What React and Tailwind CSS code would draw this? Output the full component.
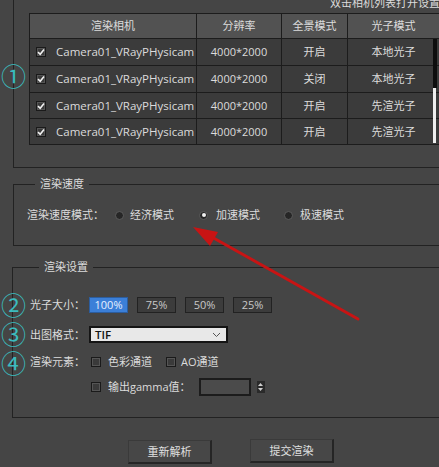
import React from 'react';

const rows = [
  { mode: '开启', photon: '本地光子', h: 'h-[27px]' },
  { mode: '关闭', photon: '本地光子', h: 'h-[27px]' },
  { mode: '开启', photon: '先渲光子', h: 'h-[26px]' },
  { mode: '开启', photon: '先渲光子', h: 'h-[26px]' },
];

const cell = 'flex items-center justify-center border-r border-b border-[#1c1c1c]';

const Check = ({ checked }) => (
  <span className="flex h-[10px] w-[10px] shrink-0 items-center justify-center border border-[#1a1a1a] bg-[#3a3a3a] shadow-[inset_0_0_0_1px_#555]">
    {checked && (
      <svg width="8" height="8" viewBox="0 0 8 8">
        <path d="M1 4.2 L3.2 6.3 L7 1.6" fill="none" stroke="#f2f2f2" strokeWidth="1.6" />
      </svg>
    )}
  </span>
);

const Radio = ({ on }) => (
  <span className="flex h-[9px] w-[9px] items-center justify-center rounded-full border border-[#5c5c5c] bg-[#262626]">
    {on && <span className="h-[4px] w-[4px] rounded-full bg-[#f0f0f0]" />}
  </span>
);

const Circled = ({ children, top }) => (
  <span
    className={`absolute left-[1px] ${top} text-[25px] leading-[24px] text-[#3bbcbf] font-['Noto_Sans_CJK_SC',sans-serif]`}
  >
    {children}
  </span>
);

export default function App() {
  return (
    <div className="relative h-[467px] w-[439px] overflow-hidden bg-[#454545] text-[11px] leading-[16px] text-[#dcdcdc] font-['Open_Sans','Noto_Sans_CJK_SC',sans-serif]">
      {/* camera list */}
      <div className="ml-[13px] flex h-[168px] w-[440px] flex-col border-b border-l border-[#222]">
        <div className="-mt-[5px] ml-[316px] whitespace-nowrap">双击相机列表打开设置</div>
        <div className="relative ml-[15px] mt-[2px] w-[411px] border-l border-t border-[#1c1c1c]">
          <div className="grid h-[25px] grid-cols-[167px_85px_66px_92px] bg-[#525252]">
            <div className={cell}>渲染相机</div>
            <div className={cell}>分辨率</div>
            <div className={cell}>全景模式</div>
            <div className={cell}>光子模式</div>
          </div>
          {rows.map((r, i) => (
            <div key={i} className={`grid grid-cols-[167px_85px_66px_92px] bg-[#3b3b3b] ${r.h}`}>
              <div className="flex items-center gap-[10px] border-b border-r border-[#1c1c1c] pl-[6px] text-[11.5px]">
                <Check checked />
                <span>Camera01_VRayPHysicam</span>
              </div>
              <div className={cell}>4000*2000</div>
              <div className={cell}>{r.mode}</div>
              <div className={cell}>{r.photon}</div>
            </div>
          ))}
          {/* scrollbar */}
          <div className="absolute left-[403px] top-[25px] h-[49px] w-[4px] bg-[#0e0e0e]" />
          <div className="absolute left-[403px] top-[74px] h-[55px] w-[3px] bg-[#eeeeee]" />
        </div>
      </div>

      {/* render speed */}
      <fieldset className="ml-[13px] mt-[8px] w-[440px] border border-[#222] pb-[22px] pl-[13px]">
        <legend className="ml-[8px] px-[5px] leading-[16px]">渲染速度</legend>
        <div className="mt-[15px] flex h-[16px] items-center">
          <span>渲染速度模式：</span>
          <span className="ml-[11px] flex items-center gap-[6px]">
            <Radio />
            经济模式
          </span>
          <span className="ml-[25px] flex items-center gap-[8px]">
            <Radio on />
            加速模式
          </span>
          <span className="ml-[24px] flex items-center gap-[7px]">
            <Radio />
            极速模式
          </span>
        </div>
      </fieldset>

      {/* render settings */}
      <fieldset className="ml-[12px] mt-[13px] w-[440px] border border-[#222] pb-[21px] pl-[17px]">
        <legend className="ml-[9px] px-[5px] leading-[16px]">渲染设置</legend>
        <div className="mt-[22px] flex h-[16px] items-center">
          <span className="w-[59px]">光子大小：</span>
          <div className="flex gap-[9px]">
            {['100%', '75%', '50%', '25%'].map((p, i) => (
              <button
                key={p}
                className={
                  i === 0
                    ? 'flex h-[16px] w-[39px] items-center justify-center border border-[#2c5d9e] bg-[#3b7fd8] text-[11px] text-[#e6efff]'
                    : 'flex h-[16px] w-[39px] items-center justify-center border border-[#222] bg-[#3c3c3c] text-[11px] text-[#c8c8c8]'
                }
              >
                {p}
              </button>
            ))}
          </div>
        </div>
        <div className="mt-[13px] flex h-[17px] items-center">
          <span className="w-[59px]">出图格式：</span>
          <div className="flex h-[17px] w-[139px] items-center justify-between border-2 border-[#151515] bg-[#e8e8e8] pl-[4px] pr-[5px]">
            <span className="text-[11.5px] font-semibold text-[#111]">TIF</span>
            <svg width="9" height="6" viewBox="0 0 9 6">
              <path d="M1 1 L4.5 4.5 L8 1" fill="none" stroke="#555" strokeWidth="1" />
            </svg>
          </div>
        </div>
        <div className="mt-[11px] flex h-[16px] items-center">
          <span className="w-[61px]">渲染元素：</span>
          <Check />
          <span className="ml-[7px]">色彩通道</span>
          <span className="ml-[14px]">
            <Check />
          </span>
          <span className="ml-[5px]">AO通道</span>
        </div>
        <div className="mt-[8px] flex h-[18px] items-center">
          <span className="ml-[61px]">
            <Check />
          </span>
          <span className="ml-[7px]">输出gamma值：</span>
          <div className="ml-[8px] h-[18px] w-[52px] border-2 border-[#1c1c1c] bg-[#4b4b4b]" />
          <div className="ml-[6px] flex h-[12px] w-[8px] flex-col items-center justify-center gap-[2px] bg-[#2a2a2a]">
            <svg width="5" height="3" viewBox="0 0 5 3">
              <path d="M0 3 L2.5 0 L5 3 Z" fill="#cfcfcf" />
            </svg>
            <svg width="5" height="3" viewBox="0 0 5 3">
              <path d="M0 0 L2.5 3 L5 0 Z" fill="#cfcfcf" />
            </svg>
          </div>
        </div>
      </fieldset>

      {/* actions */}
      <div className="ml-[128px] mt-[21px] flex items-start gap-[38px]">
        <button className="mt-[1px] flex h-[24px] w-[84px] items-center justify-center border border-b-2 border-r-2 border-[#252525] border-l-[#3a3a3a] border-t-[#3a3a3a] bg-[#474747] text-[11px] text-[#e0e0e0]">
          重新解析
        </button>
        <button className="flex h-[24px] w-[84px] items-center justify-center border border-b-2 border-r-2 border-[#252525] border-l-[#3a3a3a] border-t-[#3a3a3a] bg-[#474747] text-[11px] text-[#e0e0e0]">
          提交渲染
        </button>
      </div>

      {/* annotations */}
      <Circled top="top-[63px]">①</Circled>
      <Circled top="top-[292px]">②</Circled>
      <Circled top="top-[321px]">③</Circled>
      <Circled top="top-[350px]">④</Circled>
      <svg className="pointer-events-none absolute left-0 top-0" width="439" height="467">
        <line x1="358" y1="319" x2="210" y2="236" stroke="#c81414" strokeWidth="3" strokeLinecap="round" />
        <polygon points="193,227 218,232 210,246" fill="#c81414" />
      </svg>
    </div>
  );
}
